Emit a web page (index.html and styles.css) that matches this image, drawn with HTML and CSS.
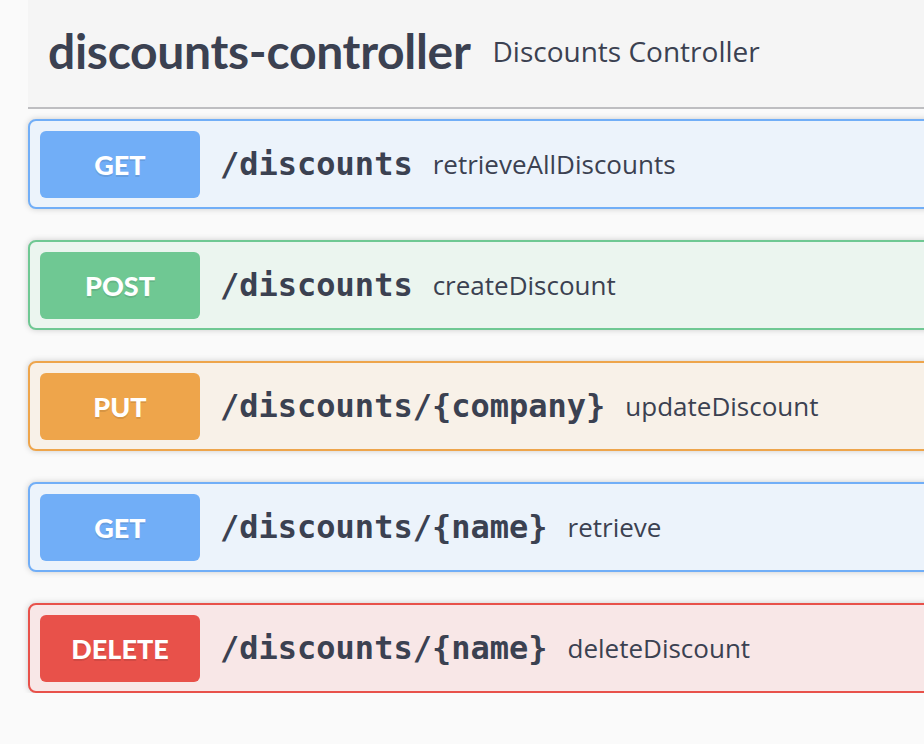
FILE: index.html
```html
<!DOCTYPE html>
<html lang="en">
<head>
<meta charset="utf-8">
<title>discounts-controller</title>
<link rel="stylesheet" href="styles.css">
</head>
<body>
<div class="page">
  <section class="tag-section">
    <h3 class="tag-header">
      <span class="tag-name">discounts-controller</span>
      <small class="tag-desc">Discounts Controller</small>
    </h3>
    <div class="ops">
      <div class="opblock get">
        <span class="method">GET</span>
        <span class="path">/discounts</span>
        <span class="summary">retrieveAllDiscounts</span>
      </div>
      <div class="opblock post">
        <span class="method">POST</span>
        <span class="path">/discounts</span>
        <span class="summary">createDiscount</span>
      </div>
      <div class="opblock put">
        <span class="method">PUT</span>
        <span class="path">/discounts/{company}</span>
        <span class="summary">updateDiscount</span>
      </div>
      <div class="opblock get">
        <span class="method">GET</span>
        <span class="path">/discounts/{name}</span>
        <span class="summary">retrieve</span>
      </div>
      <div class="opblock delete">
        <span class="method">DELETE</span>
        <span class="path">/discounts/{name}</span>
        <span class="summary">deleteDiscount</span>
      </div>
    </div>
  </section>
</div>
</body>
</html>
```

FILE: styles.css
```css
html, body {
  margin: 0;
  padding: 0;
  background: #fafafa;
  overflow: hidden;
}

.page {
  padding-left: 28px;
  width: 1300px;
  color: #3b4151;
}

.tag-header {
  box-sizing: border-box;
  height: 109px;
  margin: 0;
  padding: 0 20px 5px;
  display: flex;
  align-items: center;
  background: #f5f5f5;
  border-bottom: 2px solid #bebec1;
}

.tag-name {
  font-family: Lato, "Open Sans", sans-serif;
  font-weight: 700;
  font-size: 48px;
  line-height: 1.2;
  letter-spacing: -0.3px;
  color: #3b4151;
}

.tag-desc {
  font-family: "Open Sans", sans-serif;
  font-weight: 400;
  font-size: 28px;
  color: #3b4151;
  margin-left: 22px;
}

.ops {
  padding-top: 10px;
  display: flex;
  flex-direction: column;
  gap: 31px;
}

.opblock {
  box-sizing: border-box;
  height: 90px;
  display: flex;
  align-items: center;
  padding: 0 10px;
  border: 2px solid;
  border-radius: 8px;
  box-shadow: 0 0 6px rgba(0, 0, 0, 0.19);
}

.method {
  flex: none;
  width: 160px;
  height: 67px;
  display: flex;
  align-items: center;
  justify-content: center;
  border-radius: 6px;
  color: #fff;
  font-family: Lato, "Open Sans", sans-serif;
  font-weight: 900;
  font-size: 27px;
  text-shadow: 0 2px 0 rgba(0, 0, 0, 0.1);
}

.path {
  font-family: "DejaVu Sans Mono", monospace;
  font-weight: 700;
  font-size: 32px;
  padding: 0 20px;
  color: #3b4151;
}

.summary {
  font-family: "Open Sans", sans-serif;
  font-size: 26px;
  color: #3b4151;
}

.get { background: #ecf3fb; border-color: #71aef7; }
.get .method { background: #71aef7; }

.post { background: #ebf5ef; border-color: #6fc893; }
.post .method { background: #6fc893; }

.put { background: #f8f1e8; border-color: #eea54b; }
.put .method { background: #eea54b; }

.delete { background: #f8e7e7; border-color: #e8514a; }
.delete .method { background: #e8514a; }
```
